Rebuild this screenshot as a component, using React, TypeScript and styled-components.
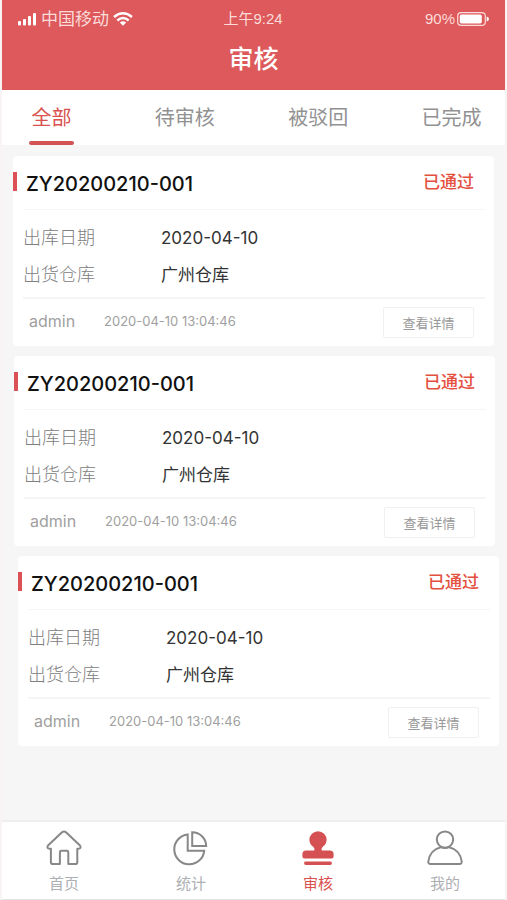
import React, { useState } from "react";
import styled, { createGlobalStyle } from "styled-components";

const GlobalStyle = createGlobalStyle`
  * { box-sizing: border-box; }
  body {
    margin: 0;
    background: #f6f6f6;
    font-family: Inter, "Noto Sans CJK SC", sans-serif;
  }
  button { font-family: inherit; cursor: pointer; }
`;

const Page = styled.div`
  min-height: 100vh;
  display: flex;
  flex-direction: column;
  border: solid #f8f4f4;
  border-width: 0 2px;
`;

const Header = styled.header`
  height: 90px;
  background: #dd595b;
  color: #fff;
`;

const StatusBar = styled.div`
  display: grid;
  grid-template-columns: 1fr auto 1fr;
  align-items: center;
  height: 38px;
  padding: 0 16px 0 15px;
  color: #fbdcda;
  font-size: 15px;
  line-height: 20px;
`;

const Carrier = styled.div`
  display: flex;
  align-items: center;
  gap: 4px;
  font-size: 17px;
`;

const Battery = styled.div`
  display: flex;
  align-items: center;
  justify-content: flex-end;
  gap: 2px;
  font-family: "Liberation Sans", sans-serif;
`;

const Clock = styled.time`
  font-family: "Liberation Sans", "Noto Sans CJK SC", sans-serif;
`;

const Title = styled.h1`
  margin: 0;
  text-align: center;
  font-size: 25px;
  line-height: 42px;
  font-weight: 500;
`;

const Tabs = styled.nav`
  display: flex;
  justify-content: space-between;
  height: 55px;
  padding: 0 23px 0 19px;
  background: #fff;
`;

const Tab = styled.button<{ $active: boolean }>`
  display: flex;
  flex-direction: column;
  align-items: center;
  justify-content: space-between;
  min-width: 61px;
  padding: 14px 0 0;
  border: 0;
  background: none;
  color: ${(p) => (p.$active ? "#d9504f" : "#919191")};
  font-size: 20px;
  line-height: 28px;
  white-space: nowrap;
  &::after {
    content: "";
    width: 45px;
    height: 4px;
    border-radius: 2px;
    background: ${(p) => (p.$active ? "#d35355" : "transparent")};
  }
`;

const List = styled.main`
  flex: 1;
  display: flex;
  flex-direction: column;
  gap: 10px;
  padding: 11px 11px 16px;
`;

const Card = styled.article<{ $shift: number }>`
  margin: 0 ${(p) => -p.$shift}px 0 ${(p) => p.$shift}px;
  border-radius: 4px;
  background: #fff;
`;

const CardHead = styled.header`
  display: flex;
  align-items: flex-start;
  justify-content: space-between;
  height: 53px;
  padding: 14px 20px 0 0;
`;

const Code = styled.h2`
  display: flex;
  align-items: flex-start;
  gap: 9px;
  margin: 0;
  color: #111;
  font-size: 20px;
  line-height: 28px;
  font-weight: 500;
  &::before {
    content: "";
    width: 4px;
    height: 19px;
    margin-top: 2px;
    background: #dc5155;
  }
`;

const State = styled.span`
  color: #e4503f;
  font-size: 17px;
  line-height: 24px;
  font-weight: 500;
`;

const Details = styled.dl`
  display: grid;
  grid-template-columns: 138px 1fr;
  row-gap: 13px;
  margin: 0 9px 0 10px;
  padding: 16px 0 10px;
  border: solid #f5f5f5;
  border-width: 1px 0 2px;
  line-height: 24px;
`;

const Label = styled.dt`
  color: #808080;
  font-size: 18px;
  font-weight: 300;
`;

const Value = styled.dd`
  margin: 0;
  color: #333;
  font-size: 17px;
`;

const CardFoot = styled.footer`
  display: flex;
  align-items: flex-start;
  height: 47px;
  padding: 8px 20px 0 16px;
  color: #a0a0a0;
  line-height: 28px;
`;

const User = styled.span`
  width: 75px;
  font-size: 16px;
`;

const Stamp = styled.time`
  flex: 1;
  font-size: 13px;
`;

const DetailButton = styled.button`
  width: 91px;
  height: 31px;
  padding: 0;
  border: 1px solid #f0f0f0;
  border-radius: 2px;
  background: #fff;
  color: #999;
  font-size: 13px;
`;

const TabBar = styled.nav`
  display: flex;
  justify-content: space-between;
  position: sticky;
  bottom: 0;
  height: 80px;
  padding: 0 42px 0 44px;
  border-top: 2px solid #eee;
  border-bottom: 1px solid #e4e4e4;
  background: #fff;
`;

const BarItem = styled.a<{ $active?: boolean }>`
  display: flex;
  flex-direction: column;
  align-items: center;
  gap: 7px;
  padding-top: 8px;
  color: ${(p) => (p.$active ? "#d9504f" : "#adafb3")};
  font-size: 15px;
  line-height: 22px;
  text-decoration: none;
  svg { color: ${(p) => (p.$active ? "#d55053" : "#888")}; }
`;

const icon = {
  width: 36,
  height: 36,
  viewBox: "0 0 36 36",
  fill: "none",
  stroke: "currentColor",
  strokeWidth: 2,
  strokeLinejoin: "round" as const,
  "aria-hidden": true,
};

const HomeIcon = () => (
  <svg {...icon}>
    <path d="M16 2.2Q18 .8 20 2.2L34 15.4Q35.6 18.6 32.4 18.8H31.3V32.2Q31.3 34 29.5 34H22.3V22.2Q22.3 20.8 20.9 20.8H15.3Q13.9 20.8 13.9 22.2V34H6.7Q4.9 34 4.9 32.2V18.8H3.6Q.4 18.6 2 15.4Z" />
  </svg>
);

const ChartIcon = () => (
  <svg {...icon} strokeLinejoin="miter">
    <path d="M14.7 4.4A15 15 0 1 0 31.2 20.8H14.7Z" />
    <path d="M19.2 2.2V15.9H33.2A14 14 0 0 0 19.2 2.2Z" />
  </svg>
);

const StampIcon = () => (
  <svg {...icon} fill="currentColor" stroke="none">
    <path d="M18 1.2A8.6 8.6 0 0 0 9.4 9.8C9.4 13 11 15.3 13.2 16.8Q15 18.2 14.3 20.5H6Q2.4 20.5 2.4 24V26.6Q2.4 28.6 4.4 28.6H31.6Q33.6 28.6 33.6 26.6V24Q33.6 20.5 30 20.5H21.7Q21 18.2 22.8 16.8C25 15.3 26.6 13 26.6 9.8A8.6 8.6 0 0 0 18 1.2Z" />
    <rect x="4.2" y="31.4" width="27.6" height="3.6" rx="1.4" />
  </svg>
);

const UserIcon = () => (
  <svg {...icon}>
    <circle cx="18" cy="9.6" r="8.2" />
    <path d="M13.8 17.2C7 18.8 2.2 24.2 1.3 31.5Q1.1 34 3.6 34H32.4Q34.9 34 34.7 31.5C33.8 24.2 29 18.8 22.2 17.2Q18 19 13.8 17.2" />
  </svg>
);

const SignalIcon = () => (
  <svg width="20" height="14" viewBox="0 0 20 14" fill="#fff" aria-hidden="true">
    <rect x="1" y="9" width="3" height="4.5" rx="1" />
    <rect x="6" y="7" width="3" height="6.5" rx="1" />
    <rect x="11" y="4" width="3" height="9.5" rx="1" />
    <rect x="16" y="1" width="3" height="12.5" rx="1" />
  </svg>
);

const WifiIcon = () => (
  <svg width="20" height="14" viewBox="0 0 20 14" fill="none" stroke="#fff" strokeWidth="2.4" aria-hidden="true">
    <path d="M1 5Q10-2.4 19 5" />
    <path d="M4.3 8.5Q10 3.6 15.7 8.5" />
    <path d="M6.8 10.6Q10 7.8 13.2 10.6L10 13.8Z" fill="#fff" stroke="none" />
  </svg>
);

const BatteryIcon = () => (
  <svg width="32" height="14" viewBox="0 0 32 14" fill="none" aria-hidden="true">
    <rect x=".7" y=".7" width="27.6" height="12.6" rx="3.4" stroke="#fbdcda" strokeWidth="1.2" />
    <rect x="2.8" y="2.6" width="22" height="8.8" rx="1.6" fill="#fff" />
    <path d="M29.7 4.6Q32 5.2 32 7T29.7 9.4Z" fill="#fff" />
  </svg>
);

const tabs = ["全部", "待审核", "被驳回", "已完成"];

const records = [0, 1, 5].map((shift) => ({
  shift,
  code: "ZY20200210-001",
  state: "已通过",
  date: "2020-04-10",
  warehouse: "广州仓库",
  user: "admin",
  stamp: "2020-04-10 13:04:46",
}));

const sections = [
  { name: "首页", Icon: HomeIcon },
  { name: "统计", Icon: ChartIcon },
  { name: "审核", Icon: StampIcon, active: true },
  { name: "我的", Icon: UserIcon },
];

export default function App() {
  const [current, setCurrent] = useState(tabs[0]);
  return (
    <Page>
      <GlobalStyle />
      <Header>
        <StatusBar>
          <Carrier>
            <SignalIcon />
            中国移动
            <WifiIcon />
          </Carrier>
          <Clock>上午9:24</Clock>
          <Battery>
            90%
            <BatteryIcon />
          </Battery>
        </StatusBar>
        <Title>审核</Title>
      </Header>
      <Tabs>
        {tabs.map((name) => (
          <Tab key={name} $active={name === current} onClick={() => setCurrent(name)}>
            {name}
          </Tab>
        ))}
      </Tabs>
      <List>
        {records.map((r) => (
          <Card key={r.shift} $shift={r.shift}>
            <CardHead>
              <Code>{r.code}</Code>
              <State>{r.state}</State>
            </CardHead>
            <Details>
              <Label>出库日期</Label>
              <Value>{r.date}</Value>
              <Label>出货仓库</Label>
              <Value>{r.warehouse}</Value>
            </Details>
            <CardFoot>
              <User>{r.user}</User>
              <Stamp>{r.stamp}</Stamp>
              <DetailButton>查看详情</DetailButton>
            </CardFoot>
          </Card>
        ))}
      </List>
      <TabBar>
        {sections.map(({ name, Icon, active }) => (
          <BarItem key={name} href="#" $active={active}>
            <Icon />
            {name}
          </BarItem>
        ))}
      </TabBar>
    </Page>
  );
}
